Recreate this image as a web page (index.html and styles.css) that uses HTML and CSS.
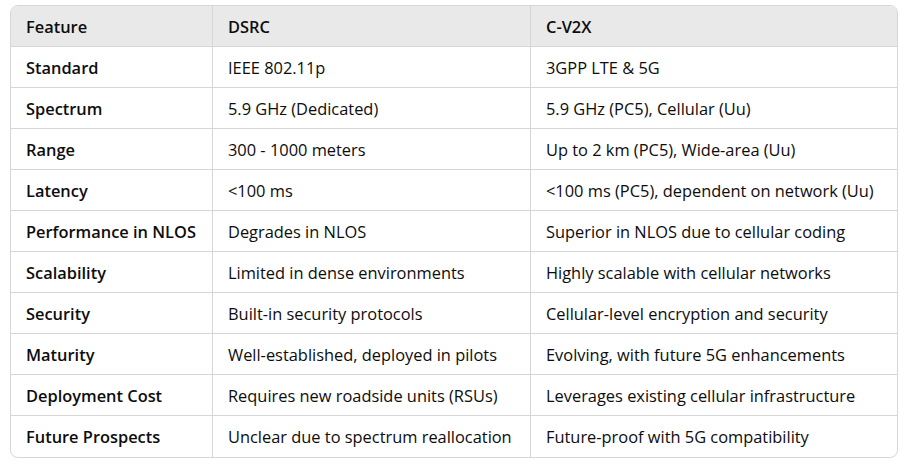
FILE: index.html
```html
<!DOCTYPE html>
<html>
<head>
<meta charset="utf-8">
<link rel="stylesheet" href="styles.css">
</head>
<body>
<div class="wrap">
<table class="cmp">
<colgroup><col class="c1"><col class="c2"><col class="c3"></colgroup>
<thead>
<tr><th>Feature</th><th>DSRC</th><th>C-V2X</th></tr>
</thead>
<tbody>
<tr><td>Standard</td><td>IEEE 802.11p</td><td>3GPP LTE &amp; 5G</td></tr>
<tr><td>Spectrum</td><td>5.9 GHz (Dedicated)</td><td>5.9 GHz (PC5), Cellular (Uu)</td></tr>
<tr><td>Range</td><td>300 - 1000 meters</td><td>Up to 2 km (PC5), Wide-area (Uu)</td></tr>
<tr><td>Latency</td><td>&lt;100 ms</td><td>&lt;100 ms (PC5), dependent on network (Uu)</td></tr>
<tr><td>Performance in NLOS</td><td>Degrades in NLOS</td><td>Superior in NLOS due to cellular coding</td></tr>
<tr><td>Scalability</td><td>Limited in dense environments</td><td>Highly scalable with cellular networks</td></tr>
<tr><td>Security</td><td>Built-in security protocols</td><td>Cellular-level encryption and security</td></tr>
<tr><td>Maturity</td><td>Well-established, deployed in pilots</td><td>Evolving, with future 5G enhancements</td></tr>
<tr><td>Deployment Cost</td><td>Requires new roadside units (RSUs)</td><td>Leverages existing cellular infrastructure</td></tr>
<tr><td>Future Prospects</td><td>Unclear due to spectrum reallocation</td><td>Future-proof with 5G compatibility</td></tr>
</tbody>
</table>
</div>
</body>
</html>
```
FILE: styles.css
```css
html, body { margin: 0; padding: 0; background: #ffffff; }
body { font-family: "Open Sans", "Noto Sans", sans-serif; color: #0d0d0d; }
.wrap { padding: 5px 9px 0 10px; }
.cmp {
  width: 888px;
  table-layout: fixed;
  border-collapse: separate;
  border-spacing: 0;
  border: 1px solid #d6d6d6;
  border-radius: 8px;
  overflow: hidden;
  font-size: 16.4px;
}
.c1 { width: 201px; }
.c2 { width: 318px; }
.c3 { width: auto; }
.cmp th, .cmp td {
  height: 41px;
  box-sizing: border-box;
  padding: 0 8px 0 15px;
  text-align: left;
  vertical-align: middle;
  white-space: nowrap;
  border-bottom: 1px solid #d6d6d6;
  border-left: 1px solid #d6d6d6;
}
.cmp th:first-child, .cmp td:first-child { border-left: none; }
.cmp tbody tr:last-child td { border-bottom: none; }
.cmp thead th { background: #e9e9e9; font-weight: 600; }
.cmp tbody td:first-child { font-weight: 600; }
.cmp tbody td { font-weight: 400; }
```
